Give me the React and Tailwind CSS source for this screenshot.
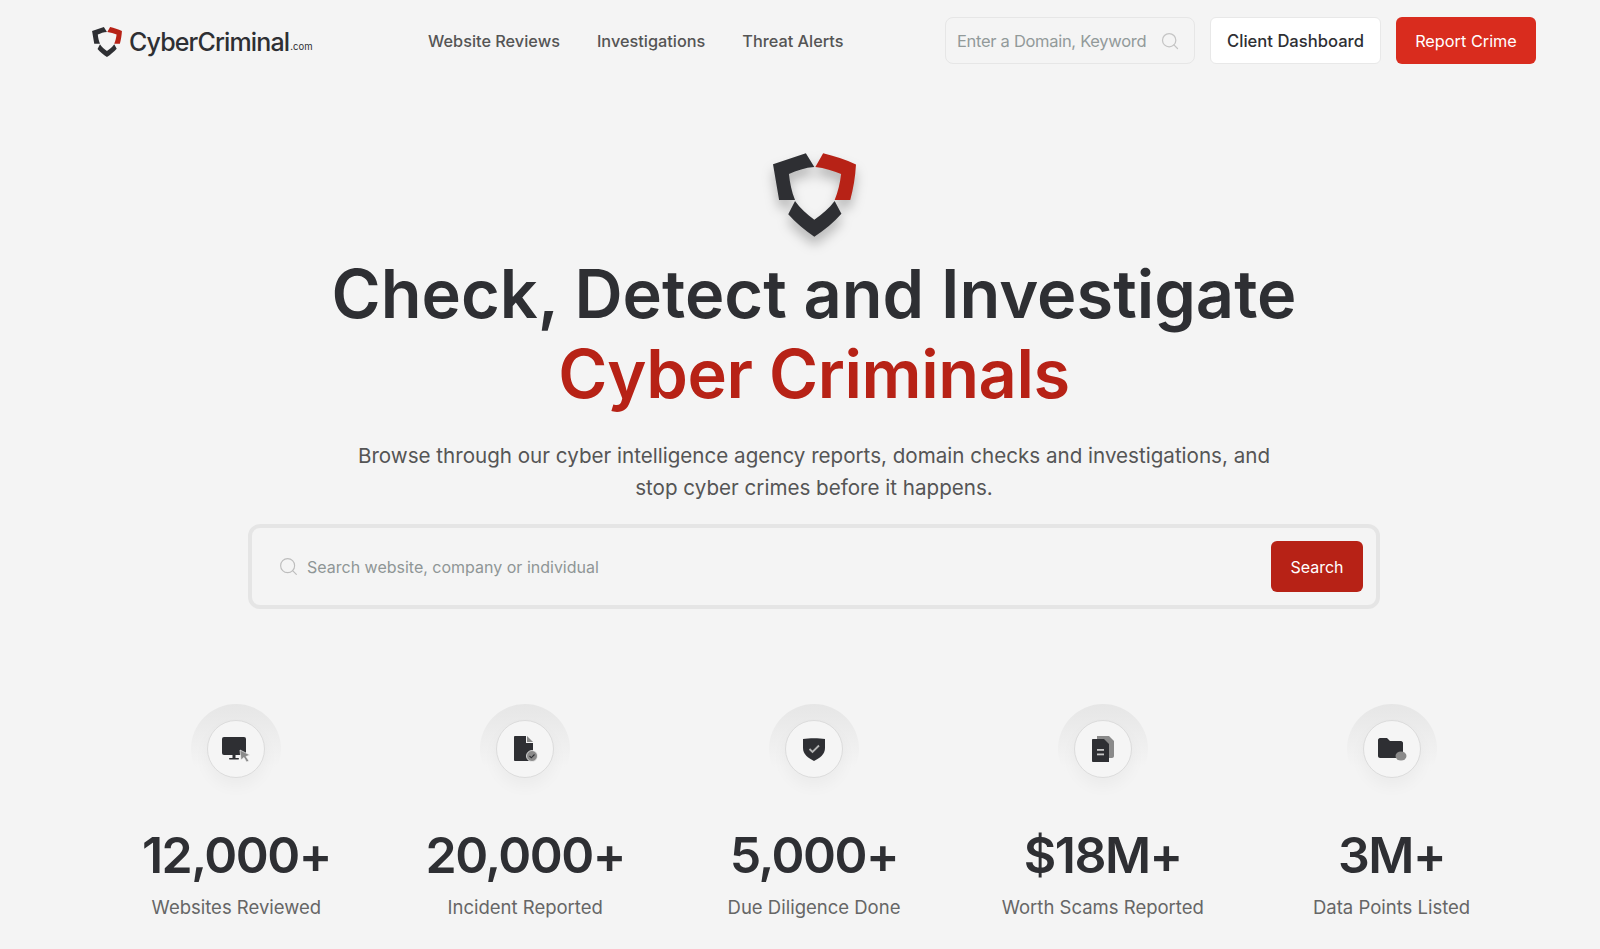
import { Search } from 'lucide-react';

const Logo = ({ className }) => (
    <svg viewBox="100 42 245 246" className={className}>
        <path d="M100 74 L197 42 L222 82 C195 84 170 92 147 103 C150 130 155 155 165 180 L118 180 Z" fill="#2e2f33" />
        <path d="M248 42 C280 50 315 60 345 75 C343 112 337 147 328 180 L282 180 C292 155 298 130 301 103 C278 93 252 85 225 82 Z" fill="#b72216" />
        <path d="M165 183 C180 205 200 222 222 238 C245 222 266 205 282 183 L302 220 C280 245 252 268 222 288 C193 268 166 247 145 222 Z" fill="#2e2f33" />
    </svg>
);

const MonitorIcon = () => (
    <svg viewBox="0 0 32 28" className="w-[32px] h-[28px]">
        <rect x="2" y="2" width="24" height="18" rx="2" fill="#2e2f33" />
        <rect x="12.5" y="20" width="3" height="3" fill="#2e2f33" />
        <rect x="9" y="23" width="10" height="1.5" rx="0.7" fill="#2e2f33" />
        <path d="M20 15 L30 20 L26 21.5 L29 26 L26.5 27 L24 22.5 L21 25 Z" fill="#8a8a8a" stroke="#f4f4f4" strokeWidth="0.7" />
    </svg>
);

const FileIcon = () => (
    <svg viewBox="0 0 28 28" className="w-[28px] h-[28px]">
        <path d="M3 2 C3 1.5 3.5 1 4 1 L15 1 L15 8 L22 8 L22 25 C22 25.5 21.500 26 21 26 L4 26 C3.500 26 3 25.500 3 25 Z" fill="#2e2f33" />
        <path d="M16 1 L22 7 L16 7 Z" fill="#8a8a8a" />
        <circle cx="21" cy="21" r="5.500" fill="#8a8a8a" stroke="#f4f4f4" strokeWidth="0.8" />
        <path d="M18.500 21 L20.300 22.800 L23.500 19.500" fill="none" stroke="#2e2f33" strokeWidth="1.1" />
    </svg>
);

const ShieldIcon = () => (
    <svg viewBox="0 0 26 26" className="w-[26px] h-[26px]">
        <path d="M2 3 C8 2 18 2 24 3 L24 12 C24 18 19 22 13 25 C7 22 2 18 2 12 Z" fill="#2e2f33" />
        <path d="M8.500 13 L11.500 16 L18 9.500" fill="none" stroke="#b5b5b5" strokeWidth="1.800" />
    </svg>
);

const DocsIcon = () => (
    <svg viewBox="0 0 26 28" className="w-[26px] h-[28px]">
        <path d="M7 1 L19 1 L24 6 L24 21 C24 22 23 23 22 23 L7 23 Z" fill="#8a8a8a" />
        <path d="M2 5 C2 4 2.500 4 3 4 L14 4 L19 9 L19 27 L3 27 C2.500 27 2 26.500 2 26 Z" fill="#2e2f33" />
        <rect x="7" y="14" width="7" height="1.800" fill="#c8c8c8" />
        <rect x="7" y="18.500" width="7" height="1.800" fill="#c8c8c8" />
    </svg>
);

const FolderIcon = () => (
    <svg viewBox="0 0 30 24" className="w-[30px] h-[24px]">
        <path d="M1 3 C1 2 2 1 3 1 L10 1 L13 4 L24 4 C25 4 26 5 26 6 L26 19 C26 20 25 21 24 21 L3 21 C2 21 1 20 1 19 Z" fill="#2e2f33" />
        <ellipse cx="24" cy="19" rx="5.500" ry="4.500" fill="#8a8a8a" />
    </svg>
);

const stats = [
    { icon: <MonitorIcon />, num: '12,000+', label: 'Websites Reviewed' },
    { icon: <FileIcon />, num: '20,000+', label: 'Incident Reported' },
    { icon: <ShieldIcon />, num: '5,000+', label: 'Due Diligence Done' },
    { icon: <DocsIcon />, num: '$18M+', label: 'Worth Scams Reported' },
    { icon: <FolderIcon />, num: '3M+', label: 'Data Points Listed' },
];

const App = () => {
    return (
        <div className="h-[949px] overflow-hidden bg-[#f4f4f4] pl-[92px] font-['Inter',sans-serif]">
            <div className="w-[1444px]">
                <header className="h-[80px] pt-[17px] flex items-start">
                    <div className="flex items-center w-[336px] pt-[10px]">
                        <Logo className="w-[30px] h-[30px]" />
                        <span className="ml-[7px] text-[25px] leading-[30px] font-medium text-[#2e2f33] tracking-[-0.85px]">CyberCriminal</span>
                        <span className="text-[9.500px] mt-[10px] ml-[1px] text-[#2e2f33]">.com</span>
                    </div>
                    <nav className="flex gap-[37px] h-[47px] pt-[1px] items-center text-[16.300px] font-medium text-[#555]">
                        <a>Website Reviews</a>
                        <a>Investigations</a>
                        <a>Threat Alerts</a>
                    </nav>
                    <div className="ml-auto flex gap-[15px]">
                        <div className="w-[250px] h-[47px] pt-[1px] flex items-center justify-between pl-[11px] pr-[14px] border border-[#e6e6e6] rounded-[8px] text-[16.500px] text-[#929a9a] tracking-[-0.3px]">
                            <span>Enter a Domain, Keyword</span>
                            <Search size={20} strokeWidth={1.500} className="text-[#c4c4c4]" />
                        </div>
                        <button className="w-[171px] h-[47px] pt-[1px] bg-white border border-[#e8e8e8] rounded-[6px] text-[16.600px] font-medium text-[#2e2f33]">Client Dashboard</button>
                        <button className="w-[140px] h-[47px] pt-[1px] bg-[#d92c1e] rounded-[6px] text-[16.300px] text-white">Report Crime</button>
                    </div>
                </header>
                <main className="flex flex-col items-center">
                    <Logo className="mt-[73px] w-[83px] h-[84px] drop-shadow-[0_8px_6px_rgba(0,0,0,0.25)]" />
                    <h1 className="mt-[17px] text-center text-[66.700px] leading-[80px] font-semibold text-[#2e2f33]">
                        Check, Detect and Investigate<br />
                        <span className="text-[#b72216] tracking-[-0.4px]">Cyber Criminals</span>
                    </h1>
                    <p className="mt-[26px] w-[940px] text-center text-[20.600px] leading-[32px] text-[#555]">
                        Browse through our cyber intelligence agency reports, domain checks and investigations, and stop cyber crimes before it happens.
                    </p>
                    <div className="mt-[20px] w-[1132px] h-[85px] border-[4px] border-[#e5e5e5] rounded-[12px] flex items-center pl-[26px] pr-[13px]">
                        <Search size={21} strokeWidth={1.300} className="text-[#bdbdbd]" />
                        <span className="ml-[8px] text-[16px] text-[#8f9696]">Search website, company or individual</span>
                        <button className="ml-auto w-[92px] h-[51px] bg-[#b72216] rounded-[6px] text-[16px] text-white">Search</button>
                    </div>
                    <div className="mt-[95px] w-full grid grid-cols-5">
                        {stats.map((s) => (
                            <div key={s.label} className="flex flex-col items-center">
                                <div className="w-[90px] h-[90px] rounded-full bg-linear-to-b from-[#e6e6e6] to-[#f4f4f4] to-70% flex items-center justify-center">
                                    <div className="w-[58px] h-[58px] rounded-full bg-[#f5f5f5] border border-[#dcdcdc] shadow-[0_8px_16px_rgba(0,0,0,0.04)] flex items-center justify-center">
                                        {s.icon}
                                    </div>
                                </div>
                                <div className="mt-[26px] text-[50px] leading-[70px] font-semibold tracking-[-1.5px] text-[#2e2f33]">{s.num}</div>
                                <div className="mt-[3px] text-[18.500px] leading-[28px] text-[#666]">{s.label}</div>
                            </div>
                        ))}
                    </div>
                </main>
            </div>
        </div>
    );
}

export default App;
